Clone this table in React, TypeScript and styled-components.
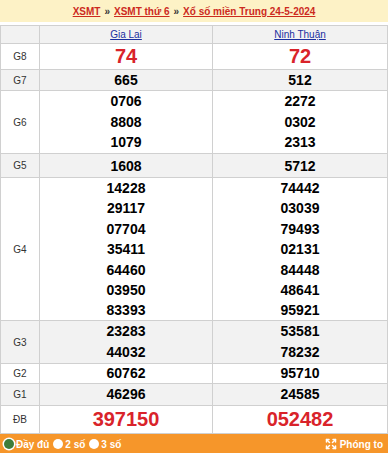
import React from "react";
import styled, { createGlobalStyle } from "styled-components";
import { Expand } from "lucide-react";

const Global = createGlobalStyle`
  html, body { margin: 0; padding: 0; background: #fff; }
  body { font-family: "Liberation Sans", Arial, sans-serif; }
`;

const Page = styled.div`
  width: 388px;
  display: flex;
  flex-direction: column;
`;

const TitleBar = styled.div`
  height: 22px;
  background: #fdf2c6;
  display: flex;
  align-items: center;
  justify-content: center;
  font-size: 10px;
  font-weight: bold;
  gap: 4px;
  margin-bottom: 3px;
`;

const Crumb = styled.a`
  color: #cc2a1e;
  text-decoration: underline;
`;

const Sep = styled.span`
  color: #333;
  font-size: 10px;
`;

const Table = styled.div`
  border: 1px solid #d0d0d0;
  border-bottom: none;
  width: 386px;
`;

const Row = styled.div<{ $h: number; $grey?: boolean }>`
  display: grid;
  grid-template-columns: 38px 173px 1fr;
  height: ${(p) => p.$h}px;
  background: ${(p) => (p.$grey ? "#f2f2f2" : "#fff")};
  border-bottom: 1px solid #d0d0d0;
`;

const Label = styled.div`
  display: flex;
  align-items: center;
  justify-content: center;
  font-size: 10px;
  color: #333;
`;

const Cell = styled.div`
  border-left: 1px solid #d0d0d0;
  display: flex;
  flex-direction: column;
  align-items: center;
  justify-content: center;
`;

const Province = styled.a`
  font-size: 10px;
  color: #1a2fa0;
  text-decoration: underline;
`;

const Num = styled.div<{ $big?: boolean; $lh: number }>`
  font-size: ${(p) => (p.$big ? 20 : 14)}px;
  line-height: ${(p) => p.$lh}px;
  font-weight: bold;
  color: ${(p) => (p.$big ? "#d9232a" : "#000")};
`;

const Footer = styled.div`
  height: 20px;
  background: #f6962a;
  display: flex;
  align-items: center;
  padding: 0 5px 0 3px;
  color: #fff;
  font-size: 10px;
  font-weight: bold;
`;

const Option = styled.span`
  display: flex;
  align-items: center;
  gap: 2px;
  margin-right: 4px;
`;

const Radio = styled.span<{ $on?: boolean }>`
  width: 10px;
  height: 10px;
  border-radius: 50%;
  background: ${(p) => (p.$on ? "#3f7d3a" : "#fff")};
  box-shadow: ${(p) => (p.$on ? "0 0 0 1.5px #fff" : "none")};
  margin-left: ${(p) => (p.$on ? 1 : 0)}px;
  display: inline-block;
`;

const Spacer = styled.div`
  flex: 1;
`;

const Zoom = styled.span`
  display: flex;
  align-items: center;
  gap: 3px;
`;

type Prize = { label: string; a: string[]; b: string[]; h: number; lh: number; big?: boolean };

const prizes: Prize[] = [
  { label: "G8", a: ["74"], b: ["72"], h: 25, lh: 25, big: true },
  { label: "G7", a: ["665"], b: ["512"], h: 20, lh: 20 },
  { label: "G6", a: ["0706", "8808", "1079"], b: ["2272", "0302", "2313"], h: 62, lh: 20.67 },
  { label: "G5", a: ["1608"], b: ["5712"], h: 23, lh: 20 },
  {
    label: "G4",
    a: ["14228", "29117", "07704", "35411", "64460", "03950", "83393"],
    b: ["74442", "03039", "79493", "02131", "84448", "48641", "95921"],
    h: 142,
    lh: 20.4,
  },
  { label: "G3", a: ["23283", "44032"], b: ["53581", "78232"], h: 42, lh: 21 },
  { label: "G2", a: ["60762"], b: ["95710"], h: 19, lh: 19 },
  { label: "G1", a: ["46296"], b: ["24585"], h: 21, lh: 21 },
  { label: "ĐB", a: ["397150"], b: ["052482"], h: 27, lh: 27, big: true },
];

export default function App() {
  return (
    <Page>
      <Global />
      <TitleBar>
        <Crumb>XSMT</Crumb>
        <Sep>»</Sep>
        <Crumb>XSMT thứ 6</Crumb>
        <Sep>»</Sep>
        <Crumb>Xổ số miền Trung 24-5-2024</Crumb>
      </TitleBar>
      <Table>
        <Row $h={17} $grey>
          <Label />
          <Cell>
            <Province>Gia Lai</Province>
          </Cell>
          <Cell>
            <Province>Ninh Thuận</Province>
          </Cell>
        </Row>
        {prizes.map((p, i) => (
          <Row key={p.label} $h={p.h} $grey={i % 2 === 1}>
            <Label>{p.label}</Label>
            <Cell>
              {p.a.map((n) => (
                <Num key={n} $big={p.big} $lh={p.lh}>
                  {n}
                </Num>
              ))}
            </Cell>
            <Cell>
              {p.b.map((n) => (
                <Num key={n} $big={p.big} $lh={p.lh}>
                  {n}
                </Num>
              ))}
            </Cell>
          </Row>
        ))}
      </Table>
      <Footer>
        <Option>
          <Radio $on />
          Đầy đủ
        </Option>
        <Option>
          <Radio />2 số
        </Option>
        <Option>
          <Radio />3 số
        </Option>
        <Spacer />
        <Zoom>
          <Expand size={12} strokeWidth={3} color="#fff" />
          Phóng to
        </Zoom>
      </Footer>
    </Page>
  );
}
